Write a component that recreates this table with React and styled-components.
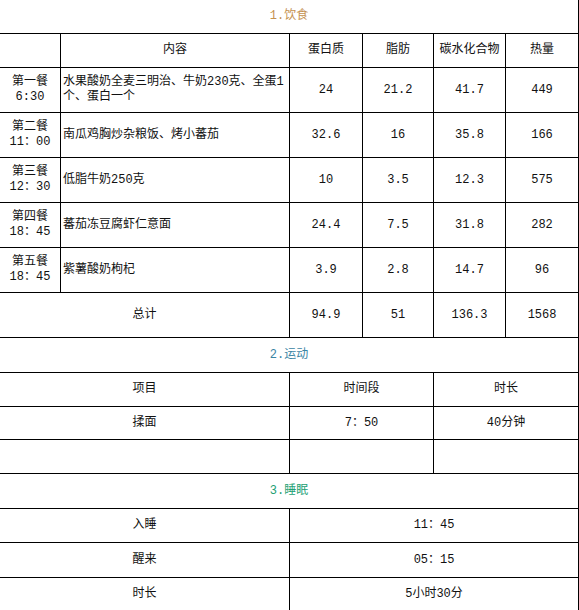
import React from 'react';
import styled, { createGlobalStyle } from 'styled-components';

const GlobalStyle = createGlobalStyle`
  html, body {
    margin: 0;
    padding: 0;
    background: #ffffff;
  }
`;

const Table = styled.table`
  width: 579px;
  margin: -1px 0 0 -1px;
  border-collapse: collapse;
  table-layout: fixed;
  font-family: 'Liberation Mono', 'Noto Sans CJK SC', monospace;
  font-size: 12px;
  line-height: 15px;
  color: #111;
`;

const Row = styled.tr`
  height: ${(p) => p.$h}px;
`;

const Cell = styled.td`
  border: 1px solid #000;
  padding: 0 2px;
  text-align: ${(p) => (p.$left ? 'left' : 'center')};
  vertical-align: middle;
  word-break: break-all;
`;

const Title = styled.td`
  border: 1px solid #000;
  text-align: center;
  vertical-align: middle;
  color: ${(p) => p.$color};
`;

const meals = [
  ['第一餐', '6:30', '水果酸奶全麦三明治、牛奶230克、全蛋1个、蛋白一个', '24', '21.2', '41.7', '449'],
  ['第二餐', '11：00', '南瓜鸡胸炒杂粮饭、烤小蕃茄', '32.6', '16', '35.8', '166'],
  ['第三餐', '12：30', '低脂牛奶250克', '10', '3.5', '12.3', '575'],
  ['第四餐', '18：45', '蕃茄冻豆腐虾仁意面', '24.4', '7.5', '31.8', '282'],
  ['第五餐', '18：45', '紫薯酸奶枸杞', '3.9', '2.8', '14.7', '96'],
];

const sleep = [
  ['入睡', '11：45', 34],
  ['醒来', '05：15', 35],
  ['时长', '5小时30分', 33],
];

const App = () => {
  return (
    <>
      <GlobalStyle />
      <Table>
        <colgroup>
          <col style={{ width: '61px' }} />
          <col style={{ width: '229px' }} />
          <col style={{ width: '73px' }} />
          <col style={{ width: '71px' }} />
          <col style={{ width: '72px' }} />
          <col style={{ width: '73px' }} />
        </colgroup>
        <tbody>
          <Row $h={34}>
            <Title colSpan={6} $color="#c4914f">1.饮食</Title>
          </Row>
          <Row $h={34}>
            <Cell />
            <Cell>内容</Cell>
            <Cell>蛋白质</Cell>
            <Cell>脂肪</Cell>
            <Cell>碳水化合物</Cell>
            <Cell>热量</Cell>
          </Row>
          {meals.map((m) => (
            <Row $h={45} key={m[0]}>
              <Cell>
                {m[0]}
                <br />
                {m[1]}
              </Cell>
              <Cell $left>{m[2]}</Cell>
              <Cell>{m[3]}</Cell>
              <Cell>{m[4]}</Cell>
              <Cell>{m[5]}</Cell>
              <Cell>{m[6]}</Cell>
            </Row>
          ))}
          <Row $h={45}>
            <Cell colSpan={2}>总计</Cell>
            <Cell>94.9</Cell>
            <Cell>51</Cell>
            <Cell>136.3</Cell>
            <Cell>1568</Cell>
          </Row>

          <Row $h={35}>
            <Title colSpan={6} $color="#3a84a3">2.运动</Title>
          </Row>
          <Row $h={34}>
            <Cell colSpan={2}>项目</Cell>
            <Cell colSpan={2}>时间段</Cell>
            <Cell colSpan={2}>时长</Cell>
          </Row>
          <Row $h={33}>
            <Cell colSpan={2}>揉面</Cell>
            <Cell colSpan={2}>7：50</Cell>
            <Cell colSpan={2}>40分钟</Cell>
          </Row>
          <Row $h={34}>
            <Cell colSpan={2} />
            <Cell colSpan={2} />
            <Cell colSpan={2} />
          </Row>

          <Row $h={35}>
            <Title colSpan={6} $color="#22a073">3.睡眠</Title>
          </Row>
          {sleep.map((s) => (
            <Row $h={s[2]} key={s[0]}>
              <Cell colSpan={2}>{s[0]}</Cell>
              <Cell colSpan={4}>{s[1]}</Cell>
            </Row>
          ))}
        </tbody>
      </Table>
    </>
  );
};

export default App;
